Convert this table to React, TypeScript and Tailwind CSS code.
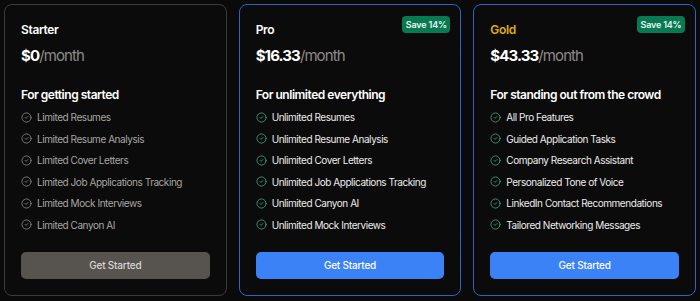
import React from "react";

function CheckIcon({ className }: { className: string }) {
  return (
    <svg viewBox="0 0 24 24" fill="none" stroke="currentColor" strokeWidth="1.8" strokeLinecap="round" strokeLinejoin="round" className={className}>
      <circle cx="12" cy="12" r="10" />
      <path d="m9 12 2 2 4-4" />
    </svg>
  );
}

type Plan = {
  name: string;
  nameClass: string;
  price: string;
  subtitle: string;
  features: string[];
  highlight: boolean;
};

const plans: Plan[] = [
  {
    name: "Starter",
    nameClass: "text-white",
    price: "$0",
    subtitle: "For getting started",
    features: [
      "Limited Resumes",
      "Limited Resume Analysis",
      "Limited Cover Letters",
      "Limited Job Applications Tracking",
      "Limited Mock Interviews",
      "Limited Canyon AI",
    ],
    highlight: false,
  },
  {
    name: "Pro",
    nameClass: "text-white",
    price: "$16.33",
    subtitle: "For unlimited everything",
    features: [
      "Unlimited Resumes",
      "Unlimited Resume Analysis",
      "Unlimited Cover Letters",
      "Unlimited Job Applications Tracking",
      "Unlimited Canyon AI",
      "Unlimited Mock Interviews",
    ],
    highlight: true,
  },
  {
    name: "Gold",
    nameClass: "text-[#e0ae0b]",
    price: "$43.33",
    subtitle: "For standing out from the crowd",
    features: [
      "All Pro Features",
      "Guided Application Tasks",
      "Company Research Assistant",
      "Personalized Tone of Voice",
      "LinkedIn Contact Recommendations",
      "Tailored Networking Messages",
    ],
    highlight: true,
  },
];

export default function App() {
  return (
    <div className="w-[700px] h-[301px] bg-[#0a0a0a] px-1 pt-1 font-['Inter',sans-serif]">
      <div className="grid grid-cols-3 gap-3">
        {plans.map((p) => (
          <div
            key={p.name}
            className={
              "relative flex flex-col rounded-lg border bg-[#0c0b0b] px-4 pt-[17px] pb-4 h-[292px] " +
              (p.highlight ? "border-[#2f62c9]" : "border-[#3d3b39]")
            }
          >
            {p.highlight && (
              <div className="absolute top-[11px] right-[10px] h-[17px] w-[48px] rounded-[4px] bg-[#077a52] flex items-center justify-center text-[9px] tracking-[-0.02em] font-semibold text-[#e8f5ee] leading-none">
                Save 14%
              </div>
            )}
            <div className={"text-[12px] tracking-[-0.03em] leading-4 font-semibold " + p.nameClass}>{p.name}</div>
            <div className="mt-[6px] leading-6 text-[15px] tracking-[-0.06em]">
              <span className="font-bold text-white">{p.price}</span>
              <span className="text-[#8c8a88]">/month</span>
            </div>
            <div className="mt-[19px] text-[12px] tracking-[-0.04em] leading-4 font-semibold text-white">{p.subtitle}</div>
            <div className="mt-[6px] flex flex-col gap-[5.6px]">
              {p.features.map((f) => (
                <div key={f} className="flex items-center gap-[5px] h-4">
                  <CheckIcon
                    className={
                      "w-[11px] h-[11px] shrink-0 " +
                      (p.highlight ? "text-[#3ea77e]" : "text-[#8b8987]")
                    }
                  />
                  <span
                    className={
                      "text-[10px] tracking-[-0.045em] leading-4 whitespace-nowrap " +
                      (p.highlight ? "text-[#ececec]" : "text-[#a7a5a3]")
                    }
                  >
                    {f}
                  </span>
                </div>
              ))}
            </div>
            <button
              className={
                "mt-[19px] h-[27px] w-full rounded-[5px] text-[10px] tracking-[-0.02em] font-medium " +
                (p.highlight ? "bg-[#3b82f6] text-white" : "bg-[#57534f] text-[#d8d6d3]")
              }
            >
              Get Started
            </button>
          </div>
        ))}
      </div>
    </div>
  );
}
